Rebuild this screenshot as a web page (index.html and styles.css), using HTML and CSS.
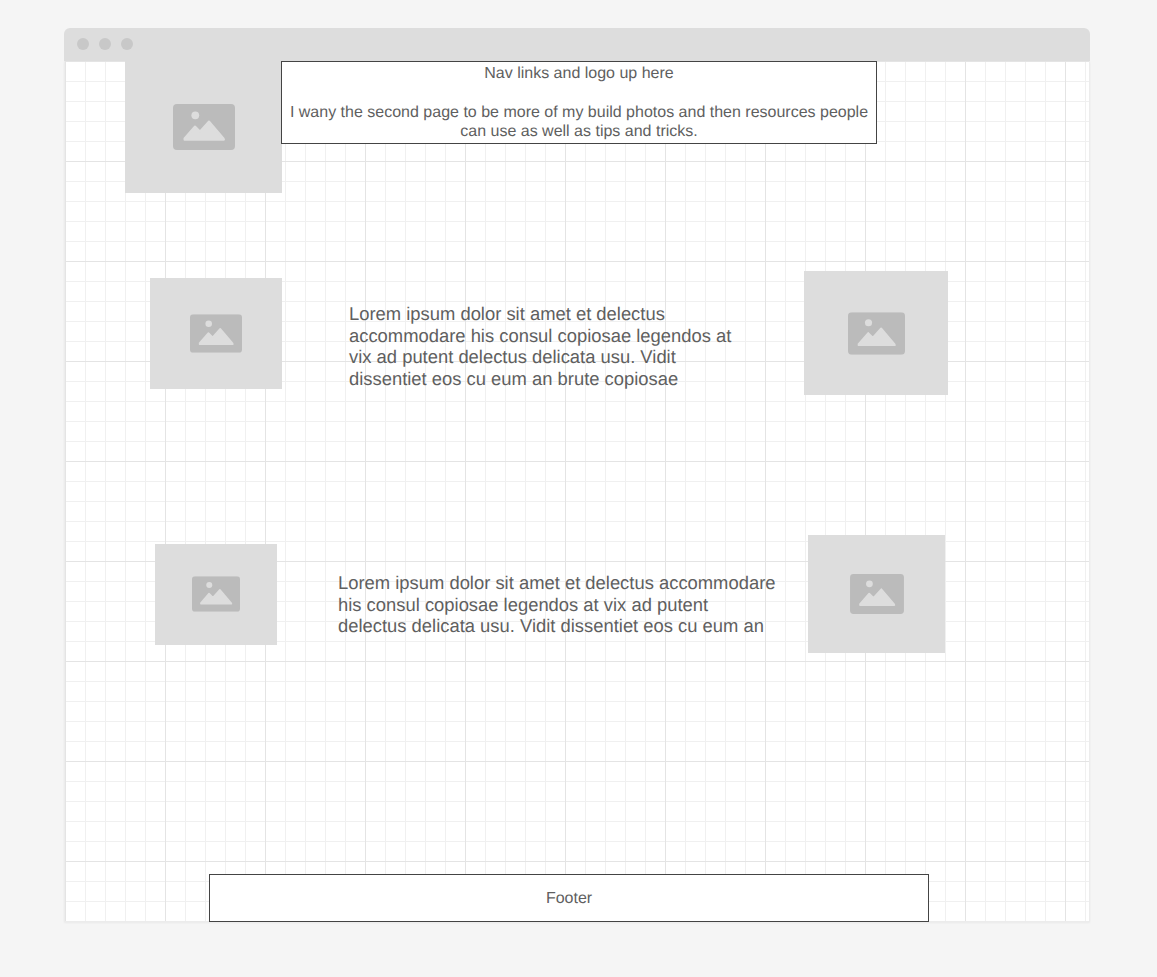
FILE: index.html
```html
<!DOCTYPE html>
<html lang="en">

<head>
    <meta charset="UTF-8">
    <title>Wireframe</title>
    <link rel="stylesheet" href="styles.css">
</head>

<body>
    <div class="browser">
        <div class="title-bar">
            <span class="dot"></span>
            <span class="dot"></span>
            <span class="dot"></span>
        </div>
        <div class="canvas">
            <div class="row row-top">
                <div class="photo photo-logo">
                    <svg class="pic pic-logo" viewBox="0 0 62 46"><use href="#pic"></use></svg>
                </div>
                <div class="box box-nav">
                    <p>Nav links and logo up here</p>
                    <p class="gap">&nbsp;</p>
                    <p>I wany the second page to be more of my build photos and then resources people can use as well as tips and tricks.</p>
                </div>
            </div>

            <div class="row row-one">
                <div class="photo photo-a">
                    <svg class="pic pic-a" viewBox="0 0 62 46"><use href="#pic"></use></svg>
                </div>
                <div class="copy copy-a">Lorem ipsum dolor sit amet et delectus accommodare his consul copiosae legendos at vix ad putent delectus delicata usu. Vidit dissentiet eos cu eum an brute copiosae</div>
                <div class="photo photo-b">
                    <svg class="pic pic-b" viewBox="0 0 62 46"><use href="#pic"></use></svg>
                </div>
            </div>

            <div class="row row-two">
                <div class="photo photo-c">
                    <svg class="pic pic-c" viewBox="0 0 62 46"><use href="#pic"></use></svg>
                </div>
                <div class="copy copy-b">Lorem ipsum dolor sit amet et delectus accommodare his consul copiosae legendos at vix ad putent delectus delicata usu. Vidit dissentiet eos cu eum an</div>
                <div class="photo photo-d">
                    <svg class="pic pic-d" viewBox="0 0 62 46"><use href="#pic"></use></svg>
                </div>
            </div>

            <div class="box box-footer">Footer</div>
        </div>
    </div>

    <svg class="defs" width="0" height="0">
        <symbol id="pic" viewBox="0 0 62 46">
            <path fill="#bbb" d="M4 0H58A4 4 0 0 1 62 4V42A4 4 0 0 1 58 46H4A4 4 0 0 1 0 42V4A4 4 0 0 1 4 0Z" />
            <circle fill="#ddd" cx="22.300" cy="11.300" r="3.900" />
            <path fill="#ddd" stroke="#ddd" stroke-width="2" stroke-linejoin="round" d="M11.500 34.500 22 22.500 27 27.500 36 17.500 50.500 34.500 51 35.700H11.500Z" />
        </symbol>
    </svg>
</body>

</html>
```

FILE: styles.css
```css
body {
    margin: 0;
    background-color: #f5f5f5;
    font-family: "Liberation Sans", Arial, sans-serif;
    color: #5f5f5f;
    text-rendering: geometricPrecision;
}

.defs {
    display: block;
}

.browser {
    width: 1026px;
    margin: 28px 0 0 64px;
    padding-bottom: 55px;
}

.title-bar {
    display: flex;
    align-items: center;
    gap: 10px;
    height: 31px;
    padding: 0 0 2px 13px;
    background-color: #ddd;
    border-radius: 6px 6px 0 0;
}

.dot {
    width: 12px;
    height: 12px;
    border-radius: 50%;
    background-color: #c8c8c8;
}

.canvas {
    height: 860px;
    background-color: #fff;
    border: 1px solid #ececec;
    border-top: 0;
    box-shadow: 0 1px 2px rgba(0, 0, 0, 0.05);
    background-image:
        linear-gradient(to right, #e4e4e4 1px, transparent 1px),
        linear-gradient(to bottom, #e4e4e4 1px, transparent 1px),
        linear-gradient(to right, #f0f0f0 1px, transparent 1px),
        linear-gradient(to bottom, #f0f0f0 1px, transparent 1px);
    background-size: 100px 100px, 100px 100px, 20px 20px, 20px 20px;
}

.row {
    display: flex;
    align-items: center;
}

.row-top {
    align-items: flex-start;
    height: 132px;
    padding-left: 60px;
}

.row-one {
    height: 124px;
    margin-top: 78px;
}

.row-two {
    height: 118px;
    margin-top: 140px;
}

.photo {
    display: flex;
    flex-shrink: 0;
    align-items: center;
    justify-content: center;
    background-color: #ddd;
}

.photo-logo {
    width: 157px;
    height: 132px;
}

.photo-a {
    width: 132px;
    height: 111px;
    margin-left: 85px;
}

.photo-b {
    width: 144px;
    height: 124px;
}

.photo-c {
    width: 122px;
    height: 101px;
    margin-left: 90px;
}

.photo-d {
    width: 137px;
    height: 118px;
}

.pic-logo {
    width: 62px;
    height: 46px;
}

.pic-a {
    width: 52px;
    height: 39px;
}

.pic-b {
    width: 57px;
    height: 43px;
}

.pic-c {
    width: 48px;
    height: 36px;
}

.pic-d {
    width: 54px;
    height: 40px;
}

.box {
    box-sizing: border-box;
    background-color: #fff;
    border: 1px solid #444;
    font-size: 16px;
    line-height: 19.300px;
    text-align: center;
}

.box p {
    margin: 0;
}

.box-nav {
    width: 596px;
    height: 83px;
    margin-left: -1px;
    padding: 2px 6px 0;
}

.box-footer {
    width: 720px;
    height: 48px;
    margin: 221px 0 0 144px;
    line-height: 48px;
}

.copy {
    flex-shrink: 0;
    align-self: flex-start;
    font-size: 18.400px;
    line-height: 21.600px;
}

.copy-a {
    width: 400px;
    margin: 32px 55px 0 67px;
}

.copy-b {
    width: 440px;
    margin: 37px 30px 0 61px;
}
```
